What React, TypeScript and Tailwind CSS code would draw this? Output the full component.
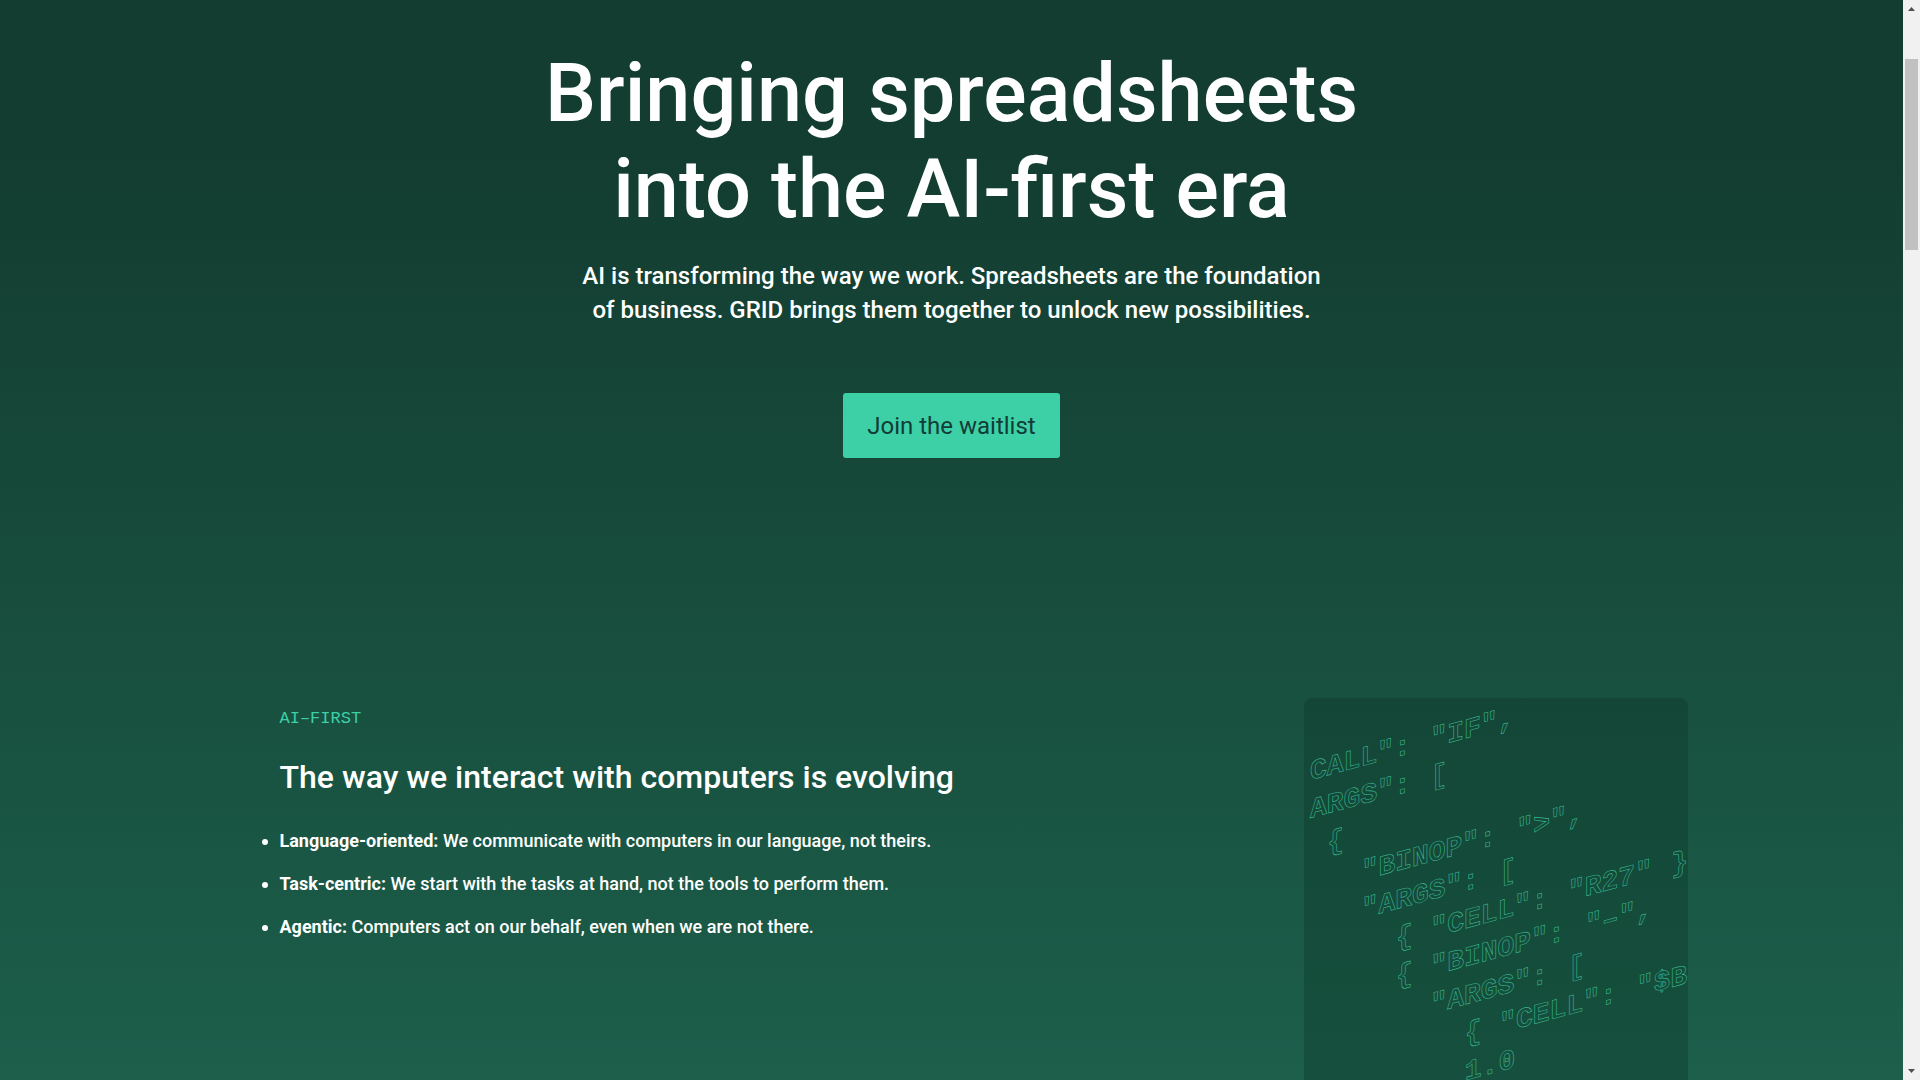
import React from "react";

const points = [
  { term: "Language-oriented:", text: "We communicate with computers in our language, not theirs." },
  { term: "Task-centric:", text: "We start with the tasks at hand, not the tools to perform them." },
  { term: "Agentic:", text: "Computers act on our behalf, even when we are not there." },
];

const code = [
  'CALL": "IF",',
  'ARGS": [',
  " {",
  '   "BINOP": ">",',
  '   "ARGS": [',
  '     { "CELL": "R27" }',
  '     { "BINOP": "–",',
  '       "ARGS": [',
  '         { "CELL": "$B',
  "         1.0",
];

const COLUMN = 17.2;
const LINE = 38;

// Each word with the column that it starts in.
const words = code.flatMap((line, row) =>
  [...line.matchAll(/\S+/g)].map((m) => ({ word: m[0], column: m.index ?? 0, row })),
);

function CodeArt() {
  return (
    <svg
      aria-hidden="true"
      viewBox="0 0 384 480"
      className="block w-full overflow-hidden font-['Liberation_Mono',monospace] text-[28px] font-bold"
      fill="none"
      stroke="#38b48d"
      strokeWidth="0.6"
    >
      <g transform="translate(6 82) skewY(-15)">
        {words.map(({ word, column, row }) => (
          <text key={`${row}-${column}`} x={column * COLUMN} y={row * LINE}>
            {word}
          </text>
        ))}
      </g>
    </svg>
  );
}

function Scrollbar() {
  return (
    <div aria-hidden="true" className="flex w-[17px] shrink-0 flex-col items-center bg-[#f1f1f1]">
      <svg viewBox="0 0 17 17" className="h-[17px] w-[17px]" fill="#505050">
        <path d="M5 11h7L8.500 7z" />
      </svg>
      <div className="mt-[42px] h-[191px] w-[13px] bg-[#c1c1c1]" />
      <svg viewBox="0 0 17 17" className="mt-auto h-[17px] w-[17px]" fill="#505050">
        <path d="M5 6h7l-3.500 4z" />
      </svg>
    </div>
  );
}

export default function App() {
  return (
    <div className="flex h-screen overflow-hidden font-['Roboto',sans-serif] text-white">
      <main className="min-w-0 flex-1 overflow-hidden bg-linear-to-b from-[#133d31] from-15% to-[#1c5f4b]">
        <section className="flex flex-col items-center px-6 pt-[46px] text-center">
          <h1 className="text-[81px] leading-[96px] font-medium">
            Bringing spreadsheets
            <br />
            into the AI-first era
          </h1>
          <p className="mt-[21px] text-2xl leading-[34px] font-medium">
            AI is transforming the way we work. Spreadsheets are the foundation
            <br />
            of business. GRID brings them together to unlock new possibilities.
          </p>
          <button
            type="button"
            className="mt-[66px] h-[65px] rounded-[3px] bg-[#3dcfa6] px-6 text-2xl text-[#133c36]"
          >
            Join the waitlist
          </button>
        </section>

        <section className="mx-auto mt-60 flex w-full max-w-[1472px] items-start justify-between pl-16">
          <div>
            <p className="mt-[11px] font-['Liberation_Mono',monospace] text-[17px] leading-5 text-[#3dcfa6]">
              AI–FIRST
            </p>
            <h2 className="mt-6 text-[32px] leading-[48px] font-medium">
              The way we interact with computers is evolving
            </h2>
            <ul className="mt-[26px] flex list-disc flex-col gap-4 text-lg leading-[27px] font-medium">
              {points.map(({ term, text }) => (
                <li key={term}>
                  <strong className="font-bold">{term}</strong> {text}
                </li>
              ))}
            </ul>
          </div>
          <div className="w-96 shrink-0 overflow-hidden rounded-lg bg-[#0b3325]/35">
            <CodeArt />
          </div>
        </section>
      </main>
      <Scrollbar />
    </div>
  );
}
